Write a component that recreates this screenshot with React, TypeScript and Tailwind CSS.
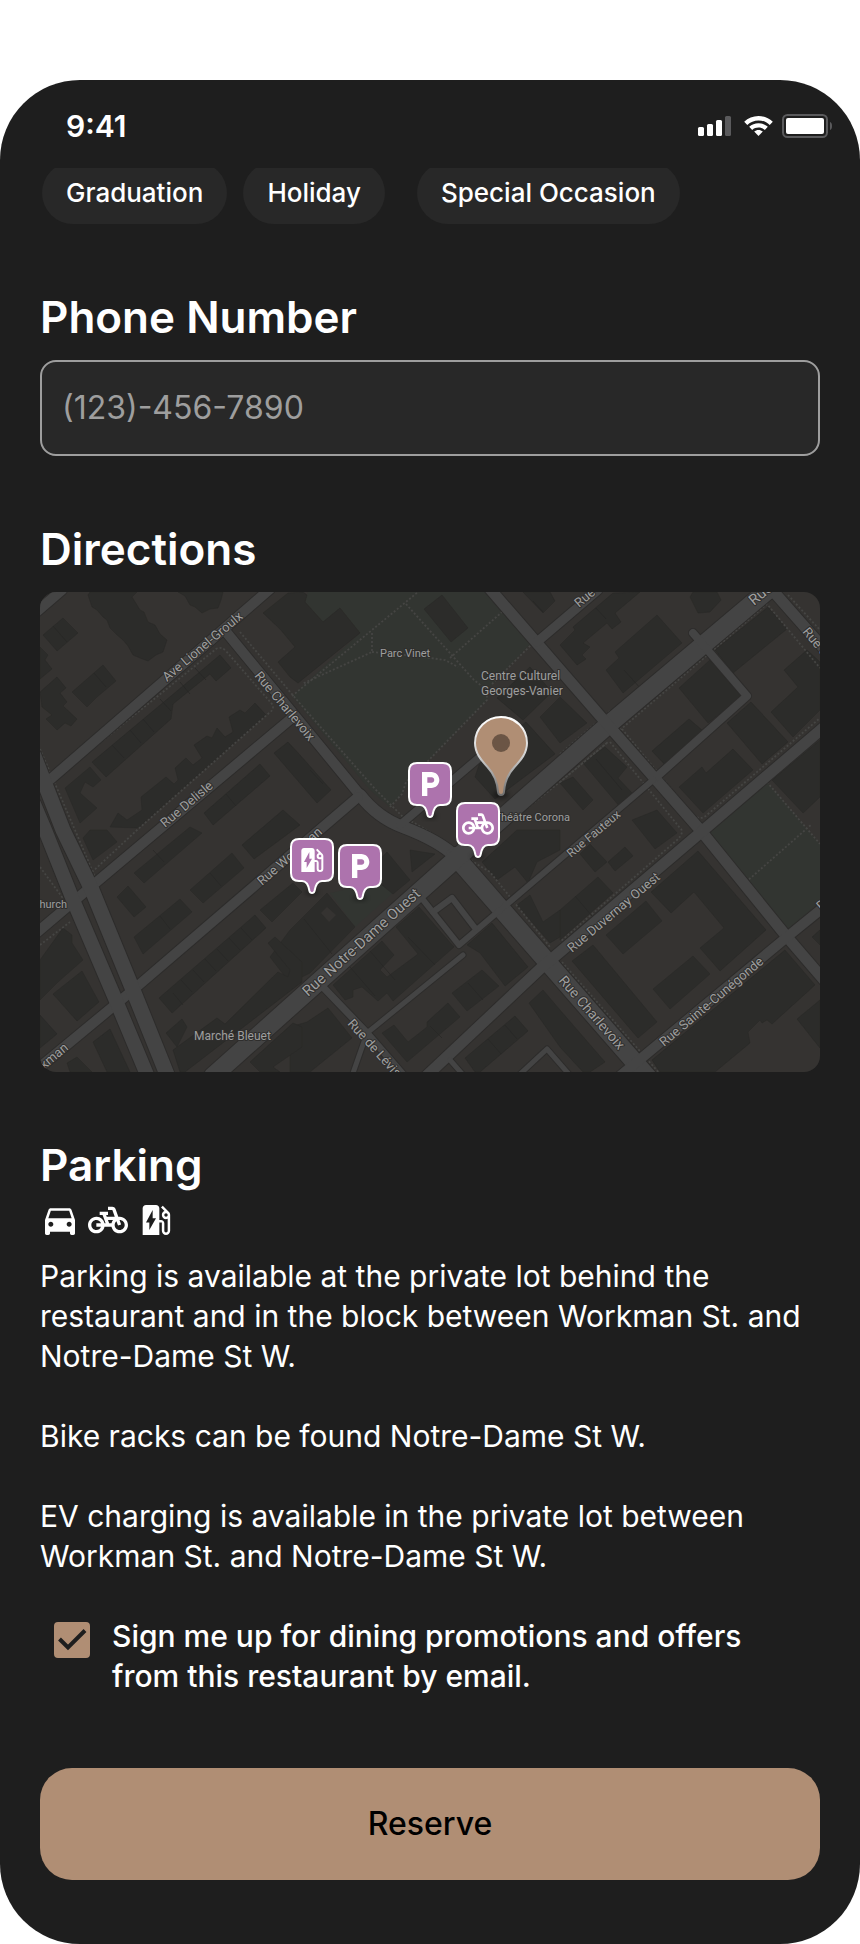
import { MdDirectionsCar, MdEvStation, MdLocalParking, MdPedalBike } from "react-icons/md";
import type { IconType } from "react-icons";

const PARKS = [
  "252,104 320,41 300,16 283,30 265,10 268,0 445,0 492,50 450,95 447,108 387,170 363,201 350,215 330,198",
  "727,190 780,252 780,310 748,337 667,243",
  "290,301 340,290 353,301 315,335",
];

const BUILDINGS = [
  "3,43 23,26 38,41 17,59",
  "32,100 63,73 76,89 57,105 47,115",
  "0,100 17,85 26,96 20,101 27,110 23,114 37,127 31,134 25,131 17,138 6,127 12,123 2,115",
  "0,55 8,63 5,68 12,77 0,87",
  "48,3 50,0 97,0 92,5 100,18 104,20 108,30 115,33 120,42 127,48 123,60 116,63 108,69 100,66 93,63 88,54 83,48 76,42 70,36 67,28 63,25 57,18 52,15",
  "138,0 183,0 181,8 178,16 170,17 162,21 155,15 150,13 145,4",
  "52,170 180,63 191,76 176,89 170,82 133,112 131,127 66,185",
  "70,235 78,221 87,228 102,218 101,205 126,185 134,192 138,188 135,176 146,166 153,173 162,166 154,153 167,144 172,146 177,136 185,145 193,140 189,125 200,118 205,121 215,111 226,123 98,236",
  "164,221 220,172 230,184 173,233",
  "234,161 248,150 260,163 291,198 277,211",
  "25,196 50,175 61,188 53,195 45,190 40,201 57,216 40,231",
  "223,21 248,1 263,0 267,3 265,10 283,30 300,16 320,41 258,91 250,85 238,70 255,55 240,37",
  "384,17 402,3 428,36 411,50",
  "483,0 510,0 515,9 503,21",
  "457,106 490,75 512,100 483,128",
  "440,170 486,130 515,162 455,207 435,185",
  "520,105 547,131 520,151 500,125",
  "575,60 617,23 642,51 583,101 566,78 579,66",
  "520,53 535,38 533,35 573,1 600,0 575,21 581,30 572,37 567,31 543,51 550,55 542,63 546,67 537,73",
  "650,5 653,0 677,0 681,8 670,20 658,21",
  "675,58 728,15 747,37 693,81",
  "639,96 670,68 702,105 668,131",
  "612,159 649,127 662,138 627,175",
  "687,131 711,110 748,150 722,172",
  "639,195 662,175 666,181 693,157 713,178 663,221",
  "731,120 758,95 744,78 767,58 780,70 780,118 753,145",
  "732,188 780,148 780,205 763,221",
  "543,171 565,155 587,175 578,186 592,201 580,215",
  "520,191 533,185 553,208 543,218",
  "592,228 617,218 637,241 615,257",
  "540,262 550,252 567,270 555,280",
  "568,270 585,255 593,264 575,279",
  "520,318 558,285 573,301 520,348",
  "611,300 658,259 726,338 680,379 660,356 684,336 654,300 631,321",
  "566,343 606,309 622,329 583,362",
  "532,369 553,353 617,430 598,446",
  "613,397 653,364 670,382 630,417",
  "612,468 745,358 775,393 732,432 727,428 722,431 720,428 708,440 710,451 675,480 620,480",
  "757,427 780,408 780,456",
  "489,411 503,398 520,418 565,470 550,480 543,480 520,455",
  "772,345 780,338 780,353",
  "356,335 379,315 414,355 353,409 347,401 338,409 322,395 313,398 313,405 305,408 293,393 342,349 354,363 340,378 347,385 378,362",
  "427,353 452,331 488,375 465,394 440,361",
  "412,401 442,378 459,394 427,419",
  "342,441 354,433 368,450 387,435 387,430 408,411 420,425 367,470",
  "425,466 438,455 475,424 488,439 440,480 435,480",
  "250,338 287,301 315,335 270,381 250,391 230,365",
  "327,281 347,260 370,288 353,302",
  "250,435 267,430 288,416 312,446 270,480 250,480",
  "442,270 457,288 475,275 488,291 497,270 520,258 520,238 477,238",
  "477,313 490,303 503,330 520,318 520,345 510,351",
  "94,281 150,235 162,241 104,291",
  "77,305 88,294 106,315 94,325",
  "94,345 140,307 152,320 103,362",
  "150,298 192,261 204,276 163,311",
  "202,253 243,218 260,233 214,267",
  "119,406 215,323 226,336 132,421",
  "220,318 253,291 262,300 232,330",
  "228,351 235,345 262,370 262,390 145,480 140,480 133,458 177,426 185,432 238,380 248,385 250,378",
  "126,441 142,427 147,435 137,455",
  "13,402 42,379 59,410 37,429",
  "0,368 23,336 32,343 32,351 43,368 18,390 0,408",
  "0,423 17,442 0,456",
  "53,450 70,437 90,480 67,480",
  "27,471 37,465 52,480 30,480",
  "210,470 253,431 262,435 262,455 233,475 240,480 220,480",
  "43,246 50,238 67,238 77,250 53,268",
  "370,258 395,262 372,280",
];

const ROOF_SEAMS =
  "M13 34L27 50M54 81L66 95M140 90L150 102M120 107L131 119M155 76L166 88M90 138L101 151M72 153L84 166M103 127L114 140M186 202L196 214M113 258L124 270M120 324L130 337M170 281L181 294M141 388L152 400M153 378L164 390M165 367L176 379M177 357L188 369M189 346L200 358M201 336L212 348M133 401L143 413M330 359L355 388M310 375L335 404M368 345L395 373M264 327L292 362M428 391L443 408M448 447L461 462M465 433L477 447M556 167L582 198M584 78L601 97M556 16L566 27M493 9L503 20M390 434L402 446M270 178L283 192M535 304L552 324";

const PATHS =
  "M14 188L176 57Q181 54 186 59L232 112Q235 117 229 121L96 239L50 282M0 157L35 238L55 285M200 40L256 107L335 197L362 224L400 246M252 104L378 0M366 12L434 88L447 98L447 108L387 170L366 190L362 202L350 215M332 41L332 60L262 92M332 60L375 64L405 68L418 75M410 66L462 20M452 92L492 52M400 250L450 280L510 355M580 138L727 12L780 76M748 3L780 38M582 137L652 222Q660 230 668 222L780 126M570 150L640 236Q645 240 637 248L520 350M727 190L780 252M706 290L772 232M522 370L620 482M520 162L571 118M520 190L568 150L520 190L430 262M0 275L22 305L58 295M0 353L30 330";

type Road = { d: string; width: number };

const ROADS: Road[] = [
  { d: "M-6 22L22 -2", width: 10 },
  { d: "M5 192L230 -3", width: 10 },
  { d: "M187 41L320 203", width: 10 },
  { d: "M320 203Q338 226 363 235Q400 249 417 266", width: 12 },
  { d: "M415 264L612 490", width: 18 },
  { d: "M173 484L277 391L417 266L568 133L740 -12", width: 18 },
  { d: "M-6 343L53 293L253 125", width: 10 },
  { d: "M-6 480L93 398L318 205", width: 10 },
  { d: "M-6 164L23 238L52 298L93 398L130 490", width: 15 },
  { d: "M-6 212L5 238L33 308L77 411L110 490", width: 14 },
  { d: "M450 -3L568 133L662 240L747 345L790 395", width: 11 },
  { d: "M497 50L558 -2", width: 9 },
  { d: "M734 0L800 75", width: 11 },
  { d: "M653 41L707 104L613 188", width: 8 },
  { d: "M613 188L419 353L380 304", width: 6 },
  { d: "M393 320L412 306L435 336", width: 6 },
  { d: "M380 490L500 377L660 241L790 130", width: 11 },
  { d: "M580 484L747 345L790 310", width: 10 },
  { d: "M282 394L327 441L366 486", width: 7 },
  { d: "M327 441L423 363M327 441L312 484", width: 5 },
  { d: "M360 233L413 188L440 165", width: 8 },
  { d: "M478 484L507 457L534 488M410 468L424 484", width: 5 },
];

type MapLabel = { text: string; x: number; y: number; size: number; angle?: number; end?: boolean };

const LABELS: MapLabel[] = [
  { text: "Ave Lionel-Groulx", x: 127, y: 90, size: 13, angle: -40 },
  { text: "Rue Delisle", x: 125, y: 236, size: 13, angle: -40 },
  { text: "Rue Charlevoix", x: 214, y: 84, size: 13, angle: 50 },
  { text: "Rue Workman", x: 222, y: 294, size: 13, angle: -41 },
  { text: "kman", x: 29, y: 457, size: 13, angle: -40, end: true },
  { text: "Rue Notre-Dame Ouest", x: 268, y: 405, size: 15, angle: -42 },
  { text: "Rue de Lévis", x: 307, y: 432, size: 13, angle: 48 },
  { text: "Rue Charlevoix", x: 518, y: 389, size: 14, angle: 49 },
  { text: "Rue Duvernay Ouest", x: 532, y: 361, size: 13, angle: -40 },
  { text: "Rue Sainte-Cunégonde", x: 624, y: 455, size: 13, angle: -40 },
  { text: "Rue Fauteux", x: 531, y: 266, size: 12, angle: -40 },
  { text: "Rue", x: 539, y: 16, size: 13, angle: -40 },
  { text: "Rue", x: 714, y: 14, size: 15, angle: -40 },
  { text: "Rue d", x: 762, y: 40, size: 13, angle: 50 },
  { text: "Rue", x: 781, y: 319, size: 13, angle: -40 },
  { text: "Parc Vinet", x: 340, y: 65, size: 11 },
  { text: "Centre Culturel", x: 441, y: 88, size: 12 },
  { text: "Georges-Vanier", x: 441, y: 103, size: 12 },
  { text: "Théâtre Corona", x: 530, y: 229, size: 11, end: true },
  { text: "hurch", x: 27, y: 316, size: 11, end: true },
  { text: "Marché Bleuet", x: 154, y: 448, size: 12 },
];

type Marker = { x: number; y: number; icon: IconType };

const MARKERS: Marker[] = [
  { x: 368, y: 170, icon: MdLocalParking },
  { x: 416, y: 210, icon: MdPedalBike },
  { x: 250, y: 246, icon: MdEvStation },
  { x: 298, y: 252, icon: MdLocalParking },
];

function StatusIcons() {
  return (
    <svg viewBox="0 0 136 26" className="h-[26px] w-[136px]" aria-hidden="true">
      <g fill="#fff">
        <rect x="2" y="14" width="6" height="9" rx="1.5" />
        <rect x="11" y="11" width="6" height="12" rx="1.5" />
        <rect x="20" y="7" width="6" height="16" rx="1.5" />
        <rect x="29" y="3" width="6" height="20" rx="1.5" fill="#5a5a5c" />
        <path d="M62.5 3C57 3 52 5.100 48.200 8.700L51.300 11.900C54.300 9.100 58.200 7.500 62.500 7.500S70.700 9.100 73.700 11.900L76.800 8.700C73 5.100 68 3 62.500 3Z" />
        <path d="M62.500 10.200C59 10.200 55.700 11.500 53.200 13.800L56.200 16.900C57.900 15.300 60.100 14.500 62.500 14.500S67.100 15.300 68.800 16.900L71.800 13.800C69.300 11.500 66 10.200 62.500 10.200Z" />
        <path d="M62.500 16.900C60.900 16.900 59.400 17.400 58.200 18.500L62.500 23L66.800 18.500C65.600 17.400 64.100 16.900 62.500 16.900Z" />
        <rect x="90" y="5" width="38" height="16" rx="2" />
        <path d="M134 9C135.500 9.500 136 11 136 13S135.500 16.500 134 17Z" fill="#5a5a5c" />
      </g>
      <rect x="87" y="2" width="44" height="22" rx="4.500" fill="none" stroke="#5a5a5c" strokeWidth="2" />
    </svg>
  );
}

function DirectionsMap() {
  return (
    <svg viewBox="0 0 780 480" role="img" aria-label="Map" className="block w-full rounded-2xl bg-[#353331]">
      <g fill="#323531">
        {PARKS.map((p) => (
          <polygon key={p} points={p} />
        ))}
      </g>
      <g fill="#2c2c2a" stroke="#282826" strokeWidth="0.5">
        {BUILDINGS.map((p) => (
          <polygon key={p} points={p} />
        ))}
      </g>
      <polygon points="281,321 287,315 296,323 289,330" fill="#353331" />
      <path d={ROOF_SEAMS} stroke="#262625" strokeWidth="0.7" />
      <path d={PATHS} fill="none" stroke="#454543" strokeWidth="1.8" strokeDasharray="2 2" />
      <g fill="none" stroke="#2d2c2b" strokeLinejoin="round" strokeLinecap="round">
        {ROADS.map((r) => (
          <path key={r.d} d={r.d} strokeWidth={r.width + 2} />
        ))}
      </g>
      <g fill="none" stroke="#444444" strokeLinejoin="round" strokeLinecap="round">
        {ROADS.map((r) => (
          <path key={r.d} d={r.d} strokeWidth={r.width} />
        ))}
      </g>
      <g
        className="font-['Roboto',sans-serif]"
        fill="#9e9e9e"
        stroke="#2f2e2d"
        strokeWidth="2"
        strokeLinejoin="round"
        paintOrder="stroke"
      >
        {LABELS.map((l) => (
          <text
            key={`${l.text}-${l.x}`}
            fontSize={l.size}
            textAnchor={l.end ? "end" : "start"}
            transform={`translate(${l.x} ${l.y}) rotate(${l.angle ?? 0})`}
          >
            {l.text}
          </text>
        ))}
      </g>
      <defs>
        <linearGradient id="pinEdge" x1="0" y1="0" x2="0" y2="1">
          <stop offset="0" stopColor="#ffffff" />
          <stop offset="0.5" stopColor="#d0d0d0" />
          <stop offset="1" stopColor="#6e6e6e" />
        </linearGradient>
        <filter id="soft" x="-50%" y="-50%" width="200%" height="200%">
          <feGaussianBlur stdDeviation="2" />
        </filter>
      </defs>
      <ellipse cx="461" cy="203" rx="8" ry="4" fill="#000" opacity="0.4" filter="url(#soft)" />
      <path
        d="M461 125C446.500 125 435 136.500 435 151C435 161 441 168 447.500 175C454 182 457.500 190 458 200Q458.300 203 461 203T464 200C464.500 190 468 182 474.500 175C481 168 487 161 487 151C487 136.500 475.500 125 461 125Z"
        fill="#b08e74"
        stroke="url(#pinEdge)"
        strokeWidth="2"
      />
      <circle cx="461" cy="151" r="9" fill="#6b5545" />
      {MARKERS.map(({ x, y, icon: Icon }) => (
        <g key={`${x}-${y}`} transform={`translate(${x} ${y})`}>
          <ellipse cx="22" cy="54" rx="7" ry="3" fill="#000" opacity="0.35" filter="url(#soft)" />
          <path
            d="M9 1H35Q43 1 43 9V35Q43 43 35 43H32C28 43 25.500 47 24.500 53Q24 55 22 55T19.500 53C18.500 47 16 43 12 43H9Q1 43 1 35V9Q1 1 9 1Z"
            fill="#ad73ad"
            stroke="#fff"
            strokeWidth="2"
          />
          <Icon x={6} y={6} size={32} color="#fff" />
        </g>
      ))}
    </svg>
  );
}

const CHIP = "h-[62px] rounded-full bg-[#282828] px-6 pb-0.5 text-[26px] font-medium whitespace-nowrap";
const HEADING = "text-[44px] leading-[50px] font-semibold";

export default function App() {
  return (
    <div className="min-h-screen bg-white pt-20">
      <main className="overflow-hidden rounded-[80px] bg-[#1e1e1e] pb-16 font-['Inter',sans-serif] text-white">
        <header className="flex h-[88px] items-center justify-between pt-1 pr-7 pl-[66px]">
          <time className="text-3xl font-semibold">9:41</time>
          <StatusIcons />
        </header>

        <div className="flex h-14 items-end overflow-hidden pl-[42px]">
          <div className="flex gap-4">
            <button type="button" className={CHIP}>Graduation</button>
            <button type="button" className={CHIP}>Holiday</button>
          </div>
          <button type="button" className={`${CHIP} ml-8`}>Special Occasion</button>
        </div>

        <form className="px-10" onSubmit={(e) => e.preventDefault()}>
          <label htmlFor="phone" className={`${HEADING} mt-[68px] block`}>Phone Number</label>
          <input
            id="phone"
            type="tel"
            placeholder="(123)-456-7890"
            className="mt-[18px] block h-24 w-full rounded-2xl border-2 border-[#9e9e9e] bg-[#282828] px-5 pb-0.5 text-[32px] outline-none placeholder:text-[#9e9e9e]"
          />

          <h2 className={`${HEADING} mt-[68px] mb-[18px]`}>Directions</h2>
          <DirectionsMap />

          <h2 className={`${HEADING} mt-[68px]`}>Parking</h2>
          <div className="mt-2.5 flex gap-2">
            <MdDirectionsCar size={40} />
            <MdPedalBike size={40} />
            <MdEvStation size={40} />
          </div>
          <div className="mt-4 flex flex-col gap-10 text-[30px] leading-10">
            <p>
              Parking is available at the private lot behind the restaurant and in the block between Workman St. and
              Notre-Dame St W.
            </p>
            <p>Bike racks can be found Notre-Dame St W.</p>
            <p>EV charging is available in the private lot between Workman St. and Notre-Dame St W.</p>
          </div>

          <div className="mt-10 flex items-start pl-3.5">
            <span className="relative mt-[6px] flex size-9 shrink-0">
              <input
                id="promotions"
                type="checkbox"
                defaultChecked
                className="peer size-9 appearance-none rounded border-2 border-[#b08e74] checked:bg-[#b08e74]"
              />
              <svg
                viewBox="0 0 36 36"
                className="pointer-events-none absolute inset-0 hidden peer-checked:block"
                fill="none"
                stroke="#1e1e1e"
                strokeWidth="4"
                aria-hidden="true"
              >
                <path d="M5.500 17L14 25.500L31 8.500" />
              </svg>
            </span>
            <label htmlFor="promotions" className="ml-[22px] text-[30px] leading-10 font-medium">
              Sign me up for dining promotions and offers
              <br />
              from this restaurant by email.
            </label>
          </div>

          <button
            type="submit"
            className="mt-[72px] block h-28 w-full rounded-[32px] bg-[#b08e74] text-[32px] font-medium text-black"
          >
            Reserve
          </button>
        </form>
      </main>
    </div>
  );
}
